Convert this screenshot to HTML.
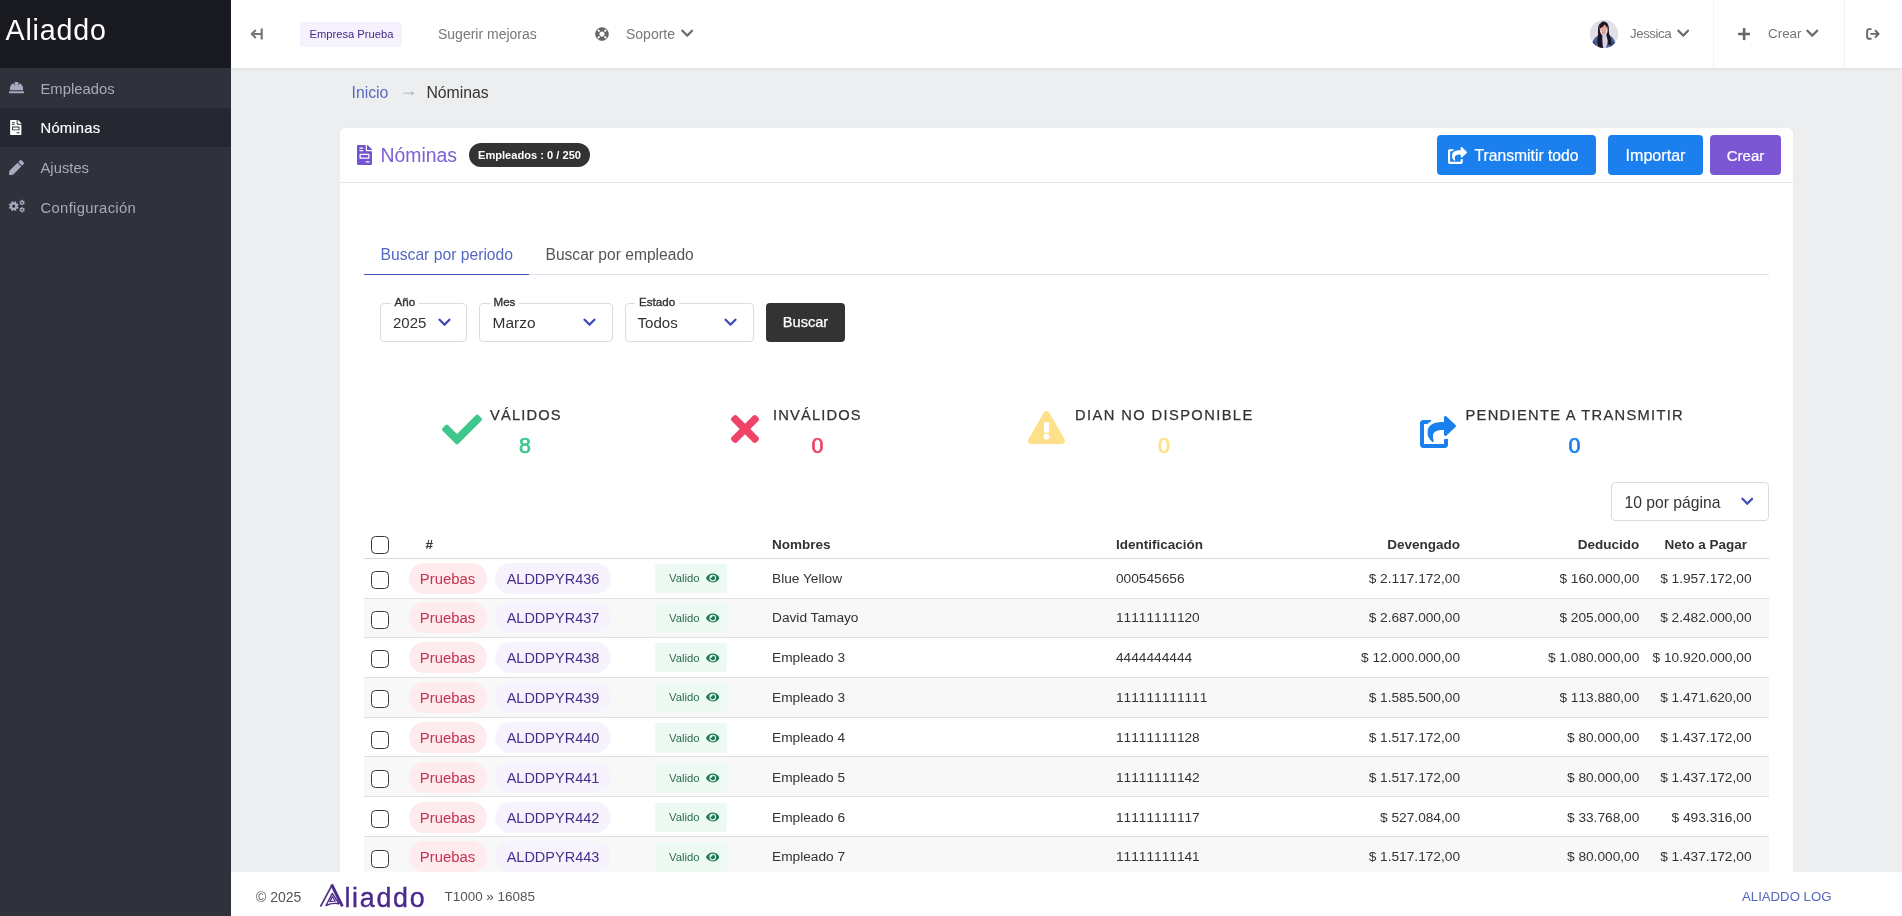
<!DOCTYPE html>
<html lang="es">
<head>
<meta charset="utf-8">
<title>Aliaddo - Nóminas</title>
<style>
*{box-sizing:border-box;margin:0;padding:0}
html,body{width:1902px;height:916px;overflow:hidden}
body{font-family:"Liberation Sans",sans-serif;background:#eceeef;color:#333;position:relative}
svg{display:block}
a{text-decoration:none;color:inherit}

/* ---------- sidebar ---------- */
#sidebar,#topbar,#card,#footer,#crumb{will-change:transform}
#sidebar{position:absolute;left:0;top:0;width:231px;height:916px;background:#2f323b;z-index:5}
#brand{height:68px;background:#191a1f;color:#fff;font-size:28.600px;line-height:68px;padding-left:5.500px;letter-spacing:.85px}
#brand span{position:relative;top:-3.700px}
#nav{list-style:none}
#nav li{height:39.7px;display:flex;align-items:center;color:#a7abb5;font-size:14.8px;position:relative}
#nav li.active{background:#252830;color:#fff}
#nav li:not(.active) .ico{color:#a4aac0}
#nav li .ico{position:absolute;left:7px;top:50%;transform:translateY(-50%);width:18px;height:18px;display:flex;align-items:center;justify-content:center}
#nav li .lbl{position:absolute;left:40.5px;top:50%;transform:translateY(-50%);white-space:nowrap;margin-top:.8px}
#nav li.active .lbl{-webkit-text-stroke:.15px #fff}

/* ---------- topbar ---------- */
#topbar{position:absolute;left:231px;top:0;width:1671px;height:68px;background:#fff;box-shadow:0 1px 3px rgba(0,0,0,.08);z-index:4}
#topbar .abs{position:absolute;white-space:nowrap}
.tb-txt{color:#777;font-size:14px;line-height:16px}
.vdiv{position:absolute;top:0;width:1px;height:68px;background:#f3f3f3}

/* ---------- breadcrumb ---------- */
#crumb{position:absolute;left:351px;padding-left:.5px;top:83px;font-size:15.8px;line-height:20px;white-space:nowrap;color:#333}
#crumb a{color:#5b69bf}
#crumb .arr{display:inline-block;width:38px;text-align:center;color:#a9abb0;font-size:18px;line-height:10px;position:relative;top:-2.100px;left:1px}

/* ---------- card ---------- */
#card{position:absolute;left:340px;top:128px;width:1453px;height:800px;background:#fff;border-radius:5px;box-shadow:0 0 1.500px rgba(0,0,0,.08)}
#card-in{position:absolute;left:0;top:.5px;width:100%;height:100%}
#card-head{position:absolute;left:0;top:0;width:100%;height:54px;border-bottom:1px solid #e6e6e6}
#card .abs{position:absolute;white-space:nowrap}


.btn{height:39.5px;border-radius:4px;color:#fff;line-height:41.5px;text-align:center;-webkit-text-stroke:.22px #fff}
.sel{height:38.5px;border:1px solid #dcdcdc;border-radius:4px;background:#fff}
.sel label{position:absolute;top:-9px;font-size:11.6px;line-height:14px;color:#333;background:#fff;padding:0 4px;-webkit-text-stroke:.35px #333}
.sel .val{position:absolute;top:0;line-height:37.6px;color:#333}
.sel .chv{position:absolute;top:11px}
.st-l{font-size:14.7px;letter-spacing:1.15px;line-height:19px;color:#333;-webkit-text-stroke:.25px #333}
.st-v{font-size:21.5px;line-height:28px;text-align:center;font-weight:400;-webkit-text-stroke:.7px currentColor}


#tbl{border-collapse:collapse;table-layout:fixed;font-size:13.7px;color:#333;white-space:nowrap}
#tbl th{height:29.5px;padding-top:1.4px !important;font-weight:700;text-align:left;padding:0;border-bottom:1px solid #dadada;font-size:13.5px;vertical-align:middle}
#tbl td{height:39.7px;padding:0 0 .4px;border-bottom:1px solid #dfdfdf;vertical-align:middle}
#tbl td:nth-child(n+5){font-kerning:none}
#tbl tbody tr:nth-child(n+5) td{padding:1.6px 0 0}
#tbl tbody tr:nth-child(even){background:#f8f8f8}
#tbl .r{text-align:right}
#tbl thead .cb{top:1px}
.cb{display:block;width:18px;height:18px;border:1.5px solid #3a3a3a;border-radius:4.5px;background:#fff;margin-left:7px;position:relative;top:1.7px}
.pill{display:inline-block;height:31px;line-height:32px;border-radius:15.5px;vertical-align:middle}
.p1{background:#fdebee;color:#c9304f;font-size:14.85px;width:78px;text-align:center;margin-left:.5px}
.p2{background:#f6f3fd;color:#4a2d8f;font-size:14.5px;width:116px;text-align:center;margin-left:8.5px}
.ok{position:relative;top:.2px;display:inline-flex;align-items:center;height:29.5px;width:71.5px;background:#ecfaf3;color:#2f6b54;font-size:11.3px;border-radius:2px;padding-left:14px;vertical-align:middle}
.ok svg{margin-left:6px}

/* ---------- footer ---------- */
#footer{position:absolute;left:231px;top:872px;width:1671px;height:44px;background:#fff;z-index:3}
#footer .abs{position:absolute;white-space:nowrap}
</style>
</head>
<body>

<aside id="sidebar">
  <div id="brand"><span>Aliaddo</span></div>
  <ul id="nav">
    <li><span class="ico"><svg viewBox="0 0 512 512" width="15" height="15" fill="currentColor"><path d="M480 288c0-80.250-49.280-148.920-119.190-177.620L320 192V80a16 16 0 0 0-16-16h-96a16 16 0 0 0-16 16v112l-40.810-81.620C81.280 139.080 32 207.750 32 288v64h448zm16 96H16a16 16 0 0 0-16 16v32a16 16 0 0 0 16 16h480a16 16 0 0 0 16-16v-32a16 16 0 0 0-16-16z"/></svg></span><span class="lbl">Empleados</span></li>
    <li class="active"><span class="ico"><svg viewBox="0 0 384 512" width="11.5" height="15" fill="currentColor"><path d="M288 256H96v64h192v-64zm89-151L279.100 7c-4.500-4.500-10.600-7-17-7H256v128h128v-6.100c0-6.300-2.500-12.400-7-16.900zm-153 31V0H24C10.700 0 0 10.700 0 24v464c0 13.300 10.700 24 24 24h336c13.300 0 24-10.700 24-24V160H248c-13.200 0-24-10.800-24-24zM64 72c0-4.420 3.580-8 8-8h80c4.420 0 8 3.580 8 8v16c0 4.420-3.580 8-8 8H72c-4.420 0-8-3.580-8-8V72zm0 64c0-4.420 3.580-8 8-8h80c4.420 0 8 3.580 8 8v16c0 4.420-3.580 8-8 8H72c-4.420 0-8-3.580-8-8v-16zm256 304c0 4.420-3.580 8-8 8h-80c-4.420 0-8-3.580-8-8v-16c0-4.420 3.580-8 8-8h80c4.420 0 8 3.580 8 8v16zm0-200v96c0 8.840-7.160 16-16 16H80c-8.840 0-16-7.160-16-16v-96c0-8.840 7.160-16 16-16h224c8.840 0 16 7.160 16 16z"/></svg></span><span class="lbl" style="letter-spacing:.2px">Nóminas</span></li>
    <li><span class="ico"><svg viewBox="0 0 512 512" width="15" height="15" fill="currentColor"><path d="M290.74 93.24l128.020 128.020-277.990 277.990-114.140 12.600C11.350 513.540-1.560 500.620.140 485.340l12.700-114.220 277.900-277.880zm207.200-19.060l-60.110-60.110c-18.750-18.750-49.160-18.750-67.910 0l-56.550 56.550 128.020 128.020 56.550-56.550c18.750-18.760 18.750-49.160 0-67.910z"/></svg></span><span class="lbl">Ajustes</span></li>
    <li><span class="ico"><svg viewBox="0 0 660 512" width="20.600" height="16" fill="currentColor" fill-rule="evenodd" style="margin-left:1px;margin-top:-2.600px"><path d="M371 283 L413 308 L389 364 L342 352 L312 382 L324 429 L268 453 L243 411 L201 411 L176 453 L120 429 L132 382 L102 352 L55 364 L31 308 L73 283 L73 241 L31 216 L55 160 L102 172 L132 142 L120 95 L176 71 L201 113 L243 113 L268 71 L324 95 L312 142 L342 172 L389 160 L413 216 L371 241Z M160 262a62 62 0 1 0 124 0a62 62 0 1 0 -124 0Z M627 135 L651 155 L628 194 L599 184 L576 197 L570 228 L526 228 L520 197 L497 184 L468 194 L445 155 L469 135 L469 109 L445 89 L468 50 L497 60 L520 47 L526 16 L570 16 L576 47 L599 60 L628 50 L651 89 L627 109Z M514 122a34 34 0 1 0 68 0a34 34 0 1 0 -68 0Z M627 415 L651 435 L628 474 L599 464 L576 477 L570 508 L526 508 L520 477 L497 464 L468 474 L445 435 L469 415 L469 389 L445 369 L468 330 L497 340 L520 327 L526 296 L570 296 L576 327 L599 340 L628 330 L651 369 L627 389Z M514 402a34 34 0 1 0 68 0a34 34 0 1 0 -68 0Z"/></svg></span><span class="lbl" style="letter-spacing:.33px">Configuración</span></li>
  </ul>
</aside>

<header id="topbar">
  <!-- collapse -->
  <span class="abs" style="left:19px;top:28px"><svg width="14" height="12" viewBox="0 0 14 12" fill="none" stroke="#777" stroke-width="2.100" stroke-linejoin="round"><path d="M10.500 6H2M5.300 2.600L1.700 6l3.600 3.400" stroke-linecap="round"/><path d="M11.700 .5v11" stroke-width="2.200"/></svg></span>
  <!-- company badge -->
  <span class="abs" style="left:68.5px;top:22px;width:102.5px;height:25px;border-radius:4px;background:#f5f2fe;color:#45298a;font-size:11.2px;line-height:24.5px;padding-left:10px">Empresa Prueba</span>
  <a class="abs tb-txt" style="left:207px;top:26px">Sugerir mejoras</a>
  <span class="abs" style="left:364px;top:27px"><svg width="14" height="14" viewBox="0 0 512 512" fill="#666"><path d="M256 8C119.033 8 8 119.033 8 256s111.033 248 248 248 248-111.033 248-248S392.967 8 256 8zm173.696 119.559l-63.399 63.399c-10.987-18.559-26.670-34.252-45.255-45.255l63.399-63.399a218.396 218.396 0 0 1 45.255 45.255zM256 352c-53.019 0-96-42.981-96-96s42.981-96 96-96 96 42.981 96 96-42.981 96-96 96zM127.559 82.304l63.399 63.399c-18.559 10.987-34.252 26.670-45.255 45.255l-63.399-63.399a218.372 218.372 0 0 1 45.255-45.255zM82.304 384.441l63.399-63.399c10.987 18.559 26.670 34.252 45.255 45.255l-63.399 63.399a218.396 218.396 0 0 1-45.255-45.255zm302.137 45.255l-63.399-63.399c18.559-10.987 34.252-26.670 45.255-45.255l63.399 63.399a218.403 218.403 0 0 1-45.255 45.255z"/></svg></span>
  <a class="abs tb-txt" style="left:395px;top:26px">Soporte</a>
  <span class="abs" style="left:449.5px;top:26.300px"><svg width="12.500" height="14.300" viewBox="0 0 448 512" fill="#6a6a6a"><path d="M207.029 381.476L12.686 187.132c-9.373-9.373-9.373-24.569 0-33.941l22.667-22.667c9.357-9.357 24.522-9.375 33.901-.04L224 284.505l154.745-154.021c9.379-9.335 24.544-9.317 33.901.04l22.667 22.667c9.373 9.373 9.373 24.569 0 33.941L240.971 381.476c-9.373 9.372-24.569 9.372-33.942 0z"/></svg></span>

  <!-- user -->
  <span class="abs" style="left:1359px;top:20px;width:28px;height:28px;border-radius:50%;overflow:hidden;background:#e6dfe4">
    <svg width="28" height="28" viewBox="0 0 28 28">
      <rect width="28" height="28" fill="#e3e0e5"/>
      <path d="M1.500 28C2 20.500 5 16 10.500 14.600h7C22.500 16 25.500 20 26 28z" fill="#44619c"/>
      <path d="M1.500 28c.3-3 1-5.500 2.200-7.500L7 28zM19 28l4.500-6.500c1.200 1.800 2 4 2.300 6.500z" fill="#2a3c6b"/>
      <path d="M11.600 13.200h5.200l1 7-1.600 7.800h-3.600z" fill="#d6d2e4"/>
      <rect x="12" y="10.500" width="3.400" height="3.600" fill="#dc9a8e"/>
      <ellipse cx="13.400" cy="7.400" rx="3.300" ry="4.700" fill="#e9a59b"/>
      <path d="M9.700 8.500C9.300 3.500 11 1.400 13.600 1.400c2.800 0 4.400 2 4 6.600-1.300-1-2.300-2.300-2.800-3.800-1.100 1.800-2.800 3.300-5.100 4.300z" fill="#1d1521"/>
      <path d="M10.100 3.200C8 5 7.800 9 8 12.500c.2 4-.9 7-.6 10.500.2 2 1 3.800 2 5h3.800c-1-4-1-8.500-.8-12.500-1.400-1.300-2.400-3.200-2.600-5.500-.2-2.500.1-5 .3-6.800zM16.600 2.600c2 1.500 2.400 5 2.300 8.400-.1 3 1.300 5.500 2.300 8.500.6 2 .4 4-.2 5.500h-2.600c-.3-3.500-1-7-2.200-10 .9-1.300 1.400-3 1.400-5 0-2.800-.3-5.400-1-7.400z" fill="#1d1521"/>
    </svg>
  </span>
  <a class="abs tb-txt" style="left:1399px;top:26px;font-size:13.3px;letter-spacing:-.45px">Jessica</a>
  <span class="abs" style="left:1445.8px;top:26.300px"><svg width="12.500" height="14.300" viewBox="0 0 448 512" fill="#6a6a6a"><path d="M207.029 381.476L12.686 187.132c-9.373-9.373-9.373-24.569 0-33.941l22.667-22.667c9.357-9.357 24.522-9.375 33.901-.04L224 284.505l154.745-154.021c9.379-9.335 24.544-9.317 33.901.04l22.667 22.667c9.373 9.373 9.373 24.569 0 33.941L240.971 381.476c-9.373 9.372-24.569 9.372-33.942 0z"/></svg></span>
  <span class="vdiv" style="left:1482px"></span>
  <span class="abs" style="left:1506.7px;top:26.700px"><svg width="12.3" height="14" viewBox="0 0 448 512" fill="#666"><path d="M416 208H272V64c0-17.670-14.330-32-32-32h-32c-17.670 0-32 14.330-32 32v144H32c-17.670 0-32 14.330-32 32v32c0 17.670 14.330 32 32 32h144v144c0 17.670 14.330 32 32 32h32c17.670 0 32-14.330 32-32V304h144c17.670 0 32-14.330 32-32v-32c0-17.670-14.330-32-32-32z"/></svg></span>
  <a class="abs tb-txt" style="left:1537px;top:26px;font-size:13.4px">Crear</a>
  <span class="abs" style="left:1575px;top:26.300px"><svg width="12.500" height="14.300" viewBox="0 0 448 512" fill="#6a6a6a"><path d="M207.029 381.476L12.686 187.132c-9.373-9.373-9.373-24.569 0-33.941l22.667-22.667c9.357-9.357 24.522-9.375 33.901-.04L224 284.505l154.745-154.021c9.379-9.335 24.544-9.317 33.901.04l22.667 22.667c9.373 9.373 9.373 24.569 0 33.941L240.971 381.476c-9.373 9.372-24.569 9.372-33.942 0z"/></svg></span>
  <span class="vdiv" style="left:1612.5px"></span>
  <span class="abs" style="left:1635px;top:28px"><svg width="13.800" height="11.800" viewBox="0 0 15 13" fill="none" stroke="#666" stroke-width="2.100" stroke-linecap="round" stroke-linejoin="round"><path d="M5.200 1.200H3.200a2 2 0 0 0-2 2v6.600a2 2 0 0 0 2 2h2M5.600 6.500h8M10.400 3l3.400 3.500-3.400 3.500"/></svg></span>
</header>

<nav id="crumb"><a>Inicio</a><span class="arr">→</span><span>Nóminas</span></nav>

<main id="card">
<div id="card-in">
  <div id="card-head">
    <span class="abs" style="left:17px;top:16.0px"><svg width="15" height="20" viewBox="0 0 384 512" fill="#7353d1"><path d="M288 256H96v64h192v-64zm89-151L279.100 7c-4.500-4.500-10.600-7-17-7H256v128h128v-6.100c0-6.300-2.500-12.400-7-16.900zm-153 31V0H24C10.700 0 0 10.700 0 24v464c0 13.300 10.700 24 24 24h336c13.300 0 24-10.700 24-24V160H248c-13.200 0-24-10.800-24-24zM64 72c0-4.420 3.580-8 8-8h80c4.420 0 8 3.580 8 8v16c0 4.420-3.580 8-8 8H72c-4.420 0-8-3.580-8-8V72zm0 64c0-4.420 3.580-8 8-8h80c4.420 0 8 3.580 8 8v16c0 4.420-3.580 8-8 8H72c-4.420 0-8-3.580-8-8v-16zm256 304c0 4.420-3.580 8-8 8h-80c-4.420 0-8-3.580-8-8v-16c0-4.420 3.580-8 8-8h80c4.420 0 8 3.580 8 8v16zm0-200v96c0 8.840-7.160 16-16 16H80c-8.840 0-16-7.160-16-16v-96c0-8.840 7.160-16 16-16h224c8.840 0 16 7.160 16 16z"/></svg></span>
    <h1 class="abs" style="left:40.5px;top:14.5px;font-size:19.4px;line-height:24px;font-weight:400;color:#7b5fd3">Nóminas</h1>
    <span class="abs" style="left:129px;top:14.5px;width:121px;height:24px;border-radius:12px;background:#333;color:#fff;font-size:11.1px;font-weight:700;line-height:24px;text-align:center">Empleados : 0 / 250</span>
    <a class="abs btn" style="left:1097px;top:6.5px;width:159px;background:#1b80ee;padding-left:37.5px;text-align:left;font-size:15.7px"><svg style="position:absolute;left:11px;top:11.500px" width="19" height="17" viewBox="0 0 576 512" fill="#fff"><path d="M568.482 177.448L424.479 313.433C409.300 327.768 384 317.140 384 295.985v-71.963c-144.575.970-205.566 35.113-164.775 171.353 4.483 14.973-12.846 26.567-25.006 17.330C155.252 383.105 120 326.488 120 269.339c0-143.937 117.599-172.500 264-173.312V24.012c0-21.174 25.317-31.768 40.479-17.448l144.003 135.988c10.020 9.463 10.028 25.425 0 34.896zM384 379.128V448H64V128h50.916a11.990 11.990 0 0 0 8.648-3.693c14.953-15.568 32.237-27.890 51.014-37.676C185.708 80.830 181.584 64 169.033 64H48C21.490 64 0 85.490 0 112v352c0 26.510 21.490 48 48 48h352c26.510 0 48-21.490 48-48v-88.806c0-8.288-8.197-14.066-16.011-11.302a71.830 71.830 0 0 1-34.189 3.377c-7.270-1.046-13.800 4.514-13.800 11.859z"/></svg>Transmitir todo</a>
    <a class="abs btn" style="left:1268px;top:6.5px;width:95px;background:#1b80ee;font-size:16.1px">Importar</a>
    <a class="abs btn" style="left:1370px;top:6.5px;width:71px;background:#7b57d3;font-size:15px">Crear</a>
  </div>
  <!-- tabs -->
  <div class="abs" style="left:24px;top:145.5px;width:1405px;height:1px;background:#dfe2e6"></div>
  <div class="abs" style="left:24px;top:145.5px;width:165px;height:1px;background:#4758b3"></div>
  <a class="abs" style="left:40.5px;top:116.8px;font-size:15.7px;line-height:20px;color:#5468c4">Buscar por periodo</a>
  <a class="abs" style="left:205.5px;top:116.8px;font-size:15.6px;line-height:20px;color:#555">Buscar por empleado</a>

  <!-- filters -->
  <div class="abs sel" style="left:40px;top:174.5px;width:87px"><label style="left:9.5px">Año</label><span class="val" style="left:12px;font-size:15px">2025</span><span class="chv" style="left:57.2px"><svg width="13" height="14.5" viewBox="0 0 448 512" fill="#3f4cb8"><path d="M207.029 381.476L12.686 187.132c-9.373-9.373-9.373-24.569 0-33.941l22.667-22.667c9.357-9.357 24.522-9.375 33.901-.04L224 284.505l154.745-154.021c9.379-9.335 24.544-9.317 33.901.04l22.667 22.667c9.373 9.373 9.373 24.569 0 33.941L240.971 381.476c-9.373 9.372-24.569 9.372-33.942 0z"/></svg></span></div>
  <div class="abs sel" style="left:139px;top:174.5px;width:134px"><label style="left:9.5px">Mes</label><span class="val" style="left:12.5px;font-size:15.5px">Marzo</span><span class="chv" style="left:103.2px"><svg width="13" height="14.5" viewBox="0 0 448 512" fill="#3f4cb8"><path d="M207.029 381.476L12.686 187.132c-9.373-9.373-9.373-24.569 0-33.941l22.667-22.667c9.357-9.357 24.522-9.375 33.901-.04L224 284.505l154.745-154.021c9.379-9.335 24.544-9.317 33.901.04l22.667 22.667c9.373 9.373 9.373 24.569 0 33.941L240.971 381.476c-9.373 9.372-24.569 9.372-33.942 0z"/></svg></span></div>
  <div class="abs sel" style="left:285px;top:174.5px;width:128.500px"><label style="left:9px">Estado</label><span class="val" style="left:11.5px;font-size:15.1px">Todos</span><span class="chv" style="left:98.2px"><svg width="13" height="14.5" viewBox="0 0 448 512" fill="#3f4cb8"><path d="M207.029 381.476L12.686 187.132c-9.373-9.373-9.373-24.569 0-33.941l22.667-22.667c9.357-9.357 24.522-9.375 33.901-.04L224 284.505l154.745-154.021c9.379-9.335 24.544-9.317 33.901.04l22.667 22.667c9.373 9.373 9.373 24.569 0 33.941L240.971 381.476c-9.373 9.372-24.569 9.372-33.942 0z"/></svg></span></div>
  <a class="abs" style="left:426px;top:174.5px;width:79px;height:38.500px;border-radius:4px;background:#333;color:#fff;font-size:14.6px;line-height:39.5px;text-align:center;-webkit-text-stroke:.25px #fff">Buscar</a>

  <!-- stats -->
  <span class="abs" style="left:102px;top:285.5px"><svg width="40" height="31" viewBox="0 64 512 384" fill="#40c78d"><path d="M173.898 439.404l-166.400-166.400c-9.997-9.997-9.997-26.206 0-36.204l36.203-36.204c9.997-9.998 26.207-9.998 36.204 0L192 312.690 432.095 72.596c9.997-9.997 26.207-9.997 36.204 0l36.203 36.204c9.997 9.997 9.997 26.206 0 36.204l-294.400 294.401c-9.998 9.997-26.207 9.997-36.204-.001z"/></svg></span>
  <span class="abs st-l" style="left:150px;top:277.5px">VÁLIDOS</span>
  <span class="abs st-v" style="left:150px;top:303.5px;width:70px;color:#40c78d">8</span>

  <span class="abs" style="left:391px;top:286.5px"><svg width="28" height="28" viewBox="0 80 352 352" fill="#ef4467"><path d="M242.720 256l100.070-100.070c12.280-12.280 12.280-32.190 0-44.480l-22.240-22.240c-12.280-12.280-32.190-12.280-44.480 0L176 189.280 75.930 89.210c-12.280-12.280-32.190-12.280-44.480 0L9.210 111.450c-12.280 12.280-12.280 32.190 0 44.480L109.280 256 9.210 356.070c-12.280 12.280-12.280 32.190 0 44.480l22.240 22.240c12.280 12.280 32.200 12.280 44.480 0L176 322.720l100.070 100.070c12.280 12.280 32.200 12.280 44.480 0l22.240-22.240c12.280-12.280 12.280-32.190 0-44.480L242.720 256z"/></svg></span>
  <span class="abs st-l" style="left:433px;top:277.5px">INVÁLIDOS</span>
  <span class="abs st-v" style="left:433px;top:303.5px;width:89px;color:#ef4467">0</span>

  <span class="abs" style="left:687.8px;top:282.5px"><svg width="37" height="33" viewBox="0 0 576 512" fill="#ffe08a"><path d="M569.517 440.013C587.975 472.007 564.806 512 527.940 512H48.054c-36.937 0-59.999-40.055-41.577-71.987L246.423 23.985c18.467-32.009 64.720-31.951 83.154 0l239.940 416.028zM288 354c-25.405 0-46 20.595-46 46s20.595 46 46 46 46-20.595 46-46-20.595-46-46-46zm-43.673-165.346l7.418 136c.347 6.364 5.609 11.346 11.982 11.346h48.546c6.373 0 11.635-4.982 11.982-11.346l7.418-136c.375-6.874-5.098-12.654-11.982-12.654h-63.383c-6.884 0-12.356 5.780-11.981 12.654z"/></svg></span>
  <span class="abs st-l" style="left:735px;top:277.5px;letter-spacing:1.4px">DIAN NO DISPONIBLE</span>
  <span class="abs st-v" style="left:735px;top:303.5px;width:178px;color:#ffe08a">0</span>

  <span class="abs" style="left:1079.5px;top:287.5px"><svg width="36" height="32" viewBox="0 0 576 512" fill="#1b80ee"><path d="M568.482 177.448L424.479 313.433C409.300 327.768 384 317.140 384 295.985v-71.963c-144.575.970-205.566 35.113-164.775 171.353 4.483 14.973-12.846 26.567-25.006 17.330C155.252 383.105 120 326.488 120 269.339c0-143.937 117.599-172.500 264-173.312V24.012c0-21.174 25.317-31.768 40.479-17.448l144.003 135.988c10.020 9.463 10.028 25.425 0 34.896zM384 379.128V448H64V128h50.916a11.990 11.990 0 0 0 8.648-3.693c14.953-15.568 32.237-27.890 51.014-37.676C185.708 80.830 181.584 64 169.033 64H48C21.490 64 0 85.490 0 112v352c0 26.510 21.490 48 48 48h352c26.510 0 48-21.490 48-48v-88.806c0-8.288-8.197-14.066-16.011-11.302a71.830 71.830 0 0 1-34.189 3.377c-7.270-1.046-13.800 4.514-13.800 11.859z"/></svg></span>
  <span class="abs st-l" style="left:1125.5px;top:277.5px;letter-spacing:1.3px">PENDIENTE A TRANSMITIR</span>
  <span class="abs st-v" style="left:1125.5px;top:303.5px;width:218px;color:#1b80ee">0</span>

  <!-- per page -->
  <div class="abs sel" style="left:1271px;top:353.2px;width:158px;height:39.3px"><span class="val" style="left:12.5px;font-size:15.7px;line-height:39px">10 por página</span><span class="chv" style="left:128.7px"><svg width="12.5" height="14.5" viewBox="0 0 448 512" fill="#3f4cb8"><path d="M207.029 381.476L12.686 187.132c-9.373-9.373-9.373-24.569 0-33.941l22.667-22.667c9.357-9.357 24.522-9.375 33.901-.04L224 284.505l154.745-154.021c9.379-9.335 24.544-9.317 33.901.04l22.667 22.667c9.373 9.373 9.373 24.569 0 33.941L240.971 381.476c-9.373 9.372-24.569 9.372-33.942 0z"/></svg></span></div>


  <table id="tbl" class="abs" style="left:24px;top:400.5px;width:1405px">
    <colgroup><col style="width:44px"><col style="width:247px"><col style="width:117px"><col style="width:344px"><col style="width:180px"><col style="width:164px"><col style="width:179.300px"><col style="width:129.700px"></colgroup>
    <thead><tr><th><span class="cb"></span></th><th style="padding-left:17.500px">#</th><th></th><th>Nombres</th><th>Identificación</th><th class="r">Devengado</th><th class="r">Deducido</th><th class="r" style="padding-right:22px">Neto a Pagar</th></tr></thead>
    <tbody>
      <tr><td><span class="cb"></span></td><td><span class="pill p1">Pruebas</span><span class="pill p2">ALDDPYR436</span></td><td><span class="ok">Valido <svg width="13.5" height="12" viewBox="0 0 576 512" fill="#1f7a52"><path d="M572.520 241.400C518.290 135.590 410.930 64 288 64S57.680 135.640 3.480 241.410a32.350 32.350 0 0 0 0 29.190C57.710 376.410 165.070 448 288 448s230.320-71.640 284.520-177.410a32.350 32.350 0 0 0 0-29.190zM288 400a144 144 0 1 1 144-144 143.930 143.930 0 0 1-144 144zm0-240a95.310 95.310 0 0 0-25.310 3.790 47.850 47.850 0 0 1-66.900 66.900A95.780 95.780 0 1 0 288 160z"/></svg></span></td><td>Blue Yellow</td><td>000545656</td><td class="r">$ 2.117.172,00</td><td class="r">$ 160.000,00</td><td class="r" style="padding-right:17.500px">$ 1.957.172,00</td></tr>
      <tr><td><span class="cb"></span></td><td><span class="pill p1">Pruebas</span><span class="pill p2">ALDDPYR437</span></td><td><span class="ok">Valido <svg width="13.5" height="12" viewBox="0 0 576 512" fill="#1f7a52"><path d="M572.520 241.400C518.290 135.590 410.930 64 288 64S57.680 135.640 3.480 241.410a32.350 32.350 0 0 0 0 29.190C57.710 376.410 165.070 448 288 448s230.320-71.640 284.520-177.410a32.350 32.350 0 0 0 0-29.190zM288 400a144 144 0 1 1 144-144 143.930 143.930 0 0 1-144 144zm0-240a95.310 95.310 0 0 0-25.310 3.790 47.850 47.850 0 0 1-66.900 66.900A95.780 95.780 0 1 0 288 160z"/></svg></span></td><td>David Tamayo</td><td>11111111120</td><td class="r">$ 2.687.000,00</td><td class="r">$ 205.000,00</td><td class="r" style="padding-right:17.500px">$ 2.482.000,00</td></tr>
      <tr><td><span class="cb"></span></td><td><span class="pill p1">Pruebas</span><span class="pill p2">ALDDPYR438</span></td><td><span class="ok">Valido <svg width="13.5" height="12" viewBox="0 0 576 512" fill="#1f7a52"><path d="M572.520 241.400C518.290 135.590 410.930 64 288 64S57.680 135.640 3.480 241.410a32.350 32.350 0 0 0 0 29.190C57.710 376.410 165.070 448 288 448s230.320-71.640 284.520-177.410a32.350 32.350 0 0 0 0-29.190zM288 400a144 144 0 1 1 144-144 143.930 143.930 0 0 1-144 144zm0-240a95.310 95.310 0 0 0-25.310 3.790 47.850 47.850 0 0 1-66.900 66.900A95.780 95.780 0 1 0 288 160z"/></svg></span></td><td>Empleado 3</td><td>4444444444</td><td class="r">$ 12.000.000,00</td><td class="r">$ 1.080.000,00</td><td class="r" style="padding-right:17.500px">$ 10.920.000,00</td></tr>
      <tr><td><span class="cb"></span></td><td><span class="pill p1">Pruebas</span><span class="pill p2">ALDDPYR439</span></td><td><span class="ok">Valido <svg width="13.5" height="12" viewBox="0 0 576 512" fill="#1f7a52"><path d="M572.520 241.400C518.290 135.590 410.930 64 288 64S57.680 135.640 3.480 241.410a32.350 32.350 0 0 0 0 29.190C57.710 376.410 165.070 448 288 448s230.320-71.640 284.520-177.410a32.350 32.350 0 0 0 0-29.190zM288 400a144 144 0 1 1 144-144 143.930 143.930 0 0 1-144 144zm0-240a95.310 95.310 0 0 0-25.310 3.790 47.850 47.850 0 0 1-66.900 66.900A95.780 95.780 0 1 0 288 160z"/></svg></span></td><td>Empleado 3</td><td>111111111111</td><td class="r">$ 1.585.500,00</td><td class="r">$ 113.880,00</td><td class="r" style="padding-right:17.500px">$ 1.471.620,00</td></tr>
      <tr><td><span class="cb"></span></td><td><span class="pill p1">Pruebas</span><span class="pill p2">ALDDPYR440</span></td><td><span class="ok">Valido <svg width="13.5" height="12" viewBox="0 0 576 512" fill="#1f7a52"><path d="M572.520 241.400C518.290 135.590 410.930 64 288 64S57.680 135.640 3.480 241.410a32.350 32.350 0 0 0 0 29.190C57.710 376.410 165.070 448 288 448s230.320-71.640 284.520-177.410a32.350 32.350 0 0 0 0-29.190zM288 400a144 144 0 1 1 144-144 143.930 143.930 0 0 1-144 144zm0-240a95.310 95.310 0 0 0-25.310 3.790 47.850 47.850 0 0 1-66.900 66.900A95.780 95.780 0 1 0 288 160z"/></svg></span></td><td>Empleado 4</td><td>11111111128</td><td class="r">$ 1.517.172,00</td><td class="r">$ 80.000,00</td><td class="r" style="padding-right:17.500px">$ 1.437.172,00</td></tr>
      <tr><td><span class="cb"></span></td><td><span class="pill p1">Pruebas</span><span class="pill p2">ALDDPYR441</span></td><td><span class="ok">Valido <svg width="13.5" height="12" viewBox="0 0 576 512" fill="#1f7a52"><path d="M572.520 241.400C518.290 135.590 410.930 64 288 64S57.680 135.640 3.480 241.410a32.350 32.350 0 0 0 0 29.190C57.710 376.410 165.070 448 288 448s230.320-71.640 284.520-177.410a32.350 32.350 0 0 0 0-29.190zM288 400a144 144 0 1 1 144-144 143.930 143.930 0 0 1-144 144zm0-240a95.310 95.310 0 0 0-25.310 3.790 47.850 47.850 0 0 1-66.900 66.900A95.780 95.780 0 1 0 288 160z"/></svg></span></td><td>Empleado 5</td><td>11111111142</td><td class="r">$ 1.517.172,00</td><td class="r">$ 80.000,00</td><td class="r" style="padding-right:17.500px">$ 1.437.172,00</td></tr>
      <tr><td><span class="cb"></span></td><td><span class="pill p1">Pruebas</span><span class="pill p2">ALDDPYR442</span></td><td><span class="ok">Valido <svg width="13.5" height="12" viewBox="0 0 576 512" fill="#1f7a52"><path d="M572.520 241.400C518.290 135.590 410.930 64 288 64S57.680 135.640 3.480 241.410a32.350 32.350 0 0 0 0 29.190C57.710 376.410 165.070 448 288 448s230.320-71.640 284.520-177.410a32.350 32.350 0 0 0 0-29.190zM288 400a144 144 0 1 1 144-144 143.930 143.930 0 0 1-144 144zm0-240a95.310 95.310 0 0 0-25.310 3.790 47.850 47.850 0 0 1-66.900 66.900A95.780 95.780 0 1 0 288 160z"/></svg></span></td><td>Empleado 6</td><td>11111111117</td><td class="r">$ 527.084,00</td><td class="r">$ 33.768,00</td><td class="r" style="padding-right:17.500px">$ 493.316,00</td></tr>
      <tr><td><span class="cb"></span></td><td><span class="pill p1">Pruebas</span><span class="pill p2">ALDDPYR443</span></td><td><span class="ok">Valido <svg width="13.5" height="12" viewBox="0 0 576 512" fill="#1f7a52"><path d="M572.520 241.400C518.290 135.590 410.930 64 288 64S57.680 135.640 3.480 241.410a32.350 32.350 0 0 0 0 29.190C57.710 376.410 165.070 448 288 448s230.320-71.640 284.520-177.410a32.350 32.350 0 0 0 0-29.190zM288 400a144 144 0 1 1 144-144 143.930 143.930 0 0 1-144 144zm0-240a95.310 95.310 0 0 0-25.310 3.790 47.850 47.850 0 0 1-66.900 66.900A95.780 95.780 0 1 0 288 160z"/></svg></span></td><td>Empleado 7</td><td>11111111141</td><td class="r">$ 1.517.172,00</td><td class="r">$ 80.000,00</td><td class="r" style="padding-right:17.500px">$ 1.437.172,00</td></tr>
      <tr><td><span class="cb"></span></td><td><span class="pill p1">Pruebas</span><span class="pill p2">ALDDPYR444</span></td><td><span class="ok">Valido <svg width="13.5" height="12" viewBox="0 0 576 512" fill="#1f7a52"><path d="M572.520 241.400C518.290 135.590 410.930 64 288 64S57.680 135.640 3.480 241.410a32.350 32.350 0 0 0 0 29.190C57.710 376.410 165.070 448 288 448s230.320-71.640 284.520-177.410a32.350 32.350 0 0 0 0-29.190zM288 400a144 144 0 1 1 144-144 143.930 143.930 0 0 1-144 144zm0-240a95.310 95.310 0 0 0-25.310 3.790 47.850 47.850 0 0 1-66.900 66.900A95.780 95.780 0 1 0 288 160z"/></svg></span></td><td>Empleado 8</td><td>11111111143</td><td class="r">$ 1.517.172,00</td><td class="r">$ 80.000,00</td><td class="r" style="padding-right:17.500px">$ 1.437.172,00</td></tr>
      <tr><td><span class="cb"></span></td><td><span class="pill p1">Pruebas</span><span class="pill p2">ALDDPYR445</span></td><td><span class="ok">Valido <svg width="13.5" height="12" viewBox="0 0 576 512" fill="#1f7a52"><path d="M572.520 241.400C518.290 135.590 410.930 64 288 64S57.680 135.640 3.480 241.410a32.350 32.350 0 0 0 0 29.190C57.710 376.410 165.070 448 288 448s230.320-71.640 284.520-177.410a32.350 32.350 0 0 0 0-29.190zM288 400a144 144 0 1 1 144-144 143.930 143.930 0 0 1-144 144zm0-240a95.310 95.310 0 0 0-25.310 3.790 47.850 47.850 0 0 1-66.900 66.900A95.780 95.780 0 1 0 288 160z"/></svg></span></td><td>Empleado 9</td><td>11111111144</td><td class="r">$ 1.517.172,00</td><td class="r">$ 80.000,00</td><td class="r" style="padding-right:17.500px">$ 1.437.172,00</td></tr>
    </tbody>
  </table>
</div>
</main>

<footer id="footer">
  <span class="abs" style="left:25px;top:16.500px;font-size:14px;line-height:16px;color:#555">© 2025</span>
  <span class="abs" style="left:83px;top:6px"><svg width="34" height="34" viewBox="0 0 34 34" fill="none" stroke="#4b2a8c" stroke-linejoin="miter" stroke-linecap="butt"><path d="M6.500 28.600L18.100 6.800" stroke-width="1.700"/><path d="M17.600 6.500L28.400 28.300" stroke-width="2.900"/><path d="M12 27.500L18.300 15.400l6.600 10.300Q18 24.600 12 27.500Z" stroke-width="1.400" stroke-linejoin="round"/><path d="M15.900 23.600l2.500-4.800 2.700 4.200z" stroke-width="1.200"/></svg></span>
  <span class="abs" style="left:113.400px;top:11.400px;font-size:26.800px;line-height:30px;color:#4b2a8c;letter-spacing:1.750px;-webkit-text-stroke:.4px #4b2a8c">liaddo</span>
  <span class="abs" style="left:213.5px;top:16.500px;font-size:13.45px;line-height:16px;color:#555">T1000 » 16085</span>
  <a class="abs" style="left:1511px;top:16.600px;font-size:13.2px;line-height:16px;color:#5567bf">ALIADDO LOG</a>
</footer>

</body>
</html>
